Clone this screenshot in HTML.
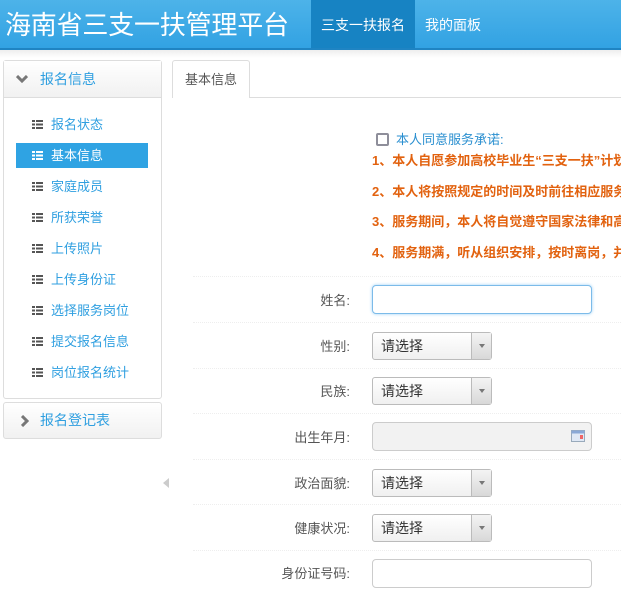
<!DOCTYPE html>
<html><head><meta charset="utf-8"><style>
*{margin:0;padding:0;box-sizing:border-box}
body{width:621px;height:597px;overflow:hidden;background:#fff;font-family:"Liberation Sans","Noto Sans CJK SC",sans-serif;position:relative}
.a{position:absolute}
#hd{left:0;top:0;width:621px;height:50px;background:linear-gradient(#4db3e9,#32a2e3);border-bottom:2px solid #1f84c3}
#logo{left:5px;top:9px;font-size:26px;line-height:32px;color:#fff;white-space:nowrap;letter-spacing:-0.2px}
#nav1{left:311px;top:0;width:104px;height:48px;background:#1783c3;color:#fff;font-size:14px;text-align:center;line-height:50px}
#nav2{left:415px;top:0;width:76px;height:48px;color:#fff;font-size:14px;text-align:center;line-height:50px}
#shadow{left:0;top:50px;width:621px;height:8px;background:linear-gradient(#eee,#fff)}
.pn{border:1px solid #ddd;border-radius:3px;background:#fff}
.ph{height:37px;background:linear-gradient(#fff,#f1f1f1);border-bottom:1px solid #ddd;color:#2f9fe0;font-size:14px;line-height:37px;padding-left:36px;position:relative}
.it{position:absolute;left:16px;width:132px;height:25px;line-height:25px;font-size:13px;color:#2f9fe0;padding-left:35px}
.it i{position:absolute;left:16px;top:8px;width:11px;height:9px;background:repeating-linear-gradient(#555 0 2px,transparent 2px 3.5px)}
.it i:before{content:"";position:absolute;left:3px;top:0;width:1px;height:9px;background:#fff}
.it.on{background:#2fa3e3;color:#fff}
.it.on i{background:repeating-linear-gradient(#fff 0 2px,transparent 2px 3.5px)}
.it.on i:before{background:#2fa3e3}
.ol{left:372px;font-size:13px;font-weight:bold;color:#e2620f;white-space:nowrap}
.sep{left:193px;width:428px;border-top:1px dotted #eee}
.lb{width:190px;left:160px;text-align:right;font-size:13px;color:#555}
.in{left:372px;width:220px;height:29px;border:1px solid #ccc;border-radius:4px;background:#fff}
.sel{left:372px;width:120px;height:28px;border:1px solid #bbb;border-radius:3px;background:linear-gradient(#fff,#f0f0f0);font-size:14px;color:#333;line-height:26px;padding-left:8px}
.sel:after{content:"";position:absolute;right:0;top:0;width:19px;height:26px;border-left:1px solid #bbb;background:linear-gradient(#f4f4f4,#d8d8d8)}
.sel b{position:absolute;right:6px;top:11px;border:3px solid transparent;border-top:4px solid #777;z-index:2}
</style></head><body>
<div id="hd" class="a"></div>
<div id="logo" class="a">海南省三支一扶管理平台</div>
<div id="nav1" class="a">三支一扶报名</div>
<div id="nav2" class="a">我的面板</div>
<div id="shadow" class="a"></div>

<div class="a pn" style="left:3px;top:60px;width:159px;height:339px">
 <div class="ph">报名信息</div>
</div>
<svg class="a" style="left:16px;top:75px" width="12" height="8"><path d="M1 1 L6 6 L11 1" stroke="#777" stroke-width="3" fill="none"/></svg>
<div class="it" style="top:112px"><i></i>报名状态</div>
<div class="it on" style="top:143px"><i></i>基本信息</div>
<div class="it" style="top:174px"><i></i>家庭成员</div>
<div class="it" style="top:205px"><i></i>所获荣誉</div>
<div class="it" style="top:236px"><i></i>上传照片</div>
<div class="it" style="top:267px"><i></i>上传身份证</div>
<div class="it" style="top:298px"><i></i>选择服务岗位</div>
<div class="it" style="top:329px"><i></i>提交报名信息</div>
<div class="it" style="top:360px"><i></i>岗位报名统计</div>

<div class="a pn" style="left:3px;top:402px;width:159px;height:37px;background:linear-gradient(#fff,#f1f1f1)">
 <div style="position:absolute;left:36px;top:0;line-height:35px;font-size:14px;color:#2f9fe0">报名登记表</div>
</div>
<svg class="a" style="left:21px;top:415px" width="8" height="12"><path d="M1 1 L6 6 L1 11" stroke="#777" stroke-width="3" fill="none"/></svg>
<svg class="a" style="left:163px;top:478px" width="6" height="10"><path d="M6 0 L0 5 L6 10Z" fill="#ccc"/></svg>

<div class="a" style="left:249px;top:97px;width:372px;border-top:1px solid #ddd"></div>
<div class="a" style="left:172px;top:60px;width:78px;height:38px;border:1px solid #ddd;border-bottom:none;border-radius:3px 3px 0 0;background:#fff;font-size:13px;color:#555;text-align:center;line-height:38px">基本信息</div>

<div class="a" style="left:376px;top:133px;width:13px;height:13px;border:2px solid #8e8e9a;border-radius:2px"></div>
<div class="a" style="left:396px;top:129px;font-size:13px;color:#2a8fd0">本人同意服务承诺:</div>
<div class="a ol" style="top:150px">1、本人自愿参加高校毕业生“三支一扶”计划</div>
<div class="a ol" style="top:181px">2、本人将按照规定的时间及时前往相应服务单位</div>
<div class="a ol" style="top:211px">3、服务期间，本人将自觉遵守国家法律和高</div>
<div class="a ol" style="top:242px">4、服务期满，听从组织安排，按时离岗，并</div>

<div class="a sep" style="top:276px"></div>
<div class="a sep" style="top:322px"></div>
<div class="a sep" style="top:368px"></div>
<div class="a sep" style="top:413px"></div>
<div class="a sep" style="top:459px"></div>
<div class="a sep" style="top:504px"></div>
<div class="a sep" style="top:550px"></div>

<div class="a lb" style="top:290px">姓名:</div>
<div class="a in" style="top:285px;border-color:#7cbbe9;box-shadow:0 0 3px #9cd0f5"></div>
<div class="a lb" style="top:336px">性别:</div>
<div class="a sel" style="top:332px">请选择<b></b></div>
<div class="a lb" style="top:381px">民族:</div>
<div class="a sel" style="top:377px">请选择<b></b></div>
<div class="a lb" style="top:427px">出生年月:</div>
<div class="a in" style="top:422px;background:#f2f2f2"></div>
<svg class="a" style="left:571px;top:430px" width="14" height="12"><rect x="0.5" y="0.5" width="13" height="11" fill="#dfe8f5" stroke="#9ab"/><rect x="0.5" y="0.5" width="13" height="3" fill="#8aa8d6"/><rect x="9" y="5" width="3" height="4" fill="#e66"/></svg>
<div class="a lb" style="top:473px">政治面貌:</div>
<div class="a sel" style="top:469px">请选择<b></b></div>
<div class="a lb" style="top:518px">健康状况:</div>
<div class="a sel" style="top:514px">请选择<b></b></div>
<div class="a lb" style="top:563px">身份证号码:</div>
<div class="a in" style="top:559px"></div>
</body></html>
